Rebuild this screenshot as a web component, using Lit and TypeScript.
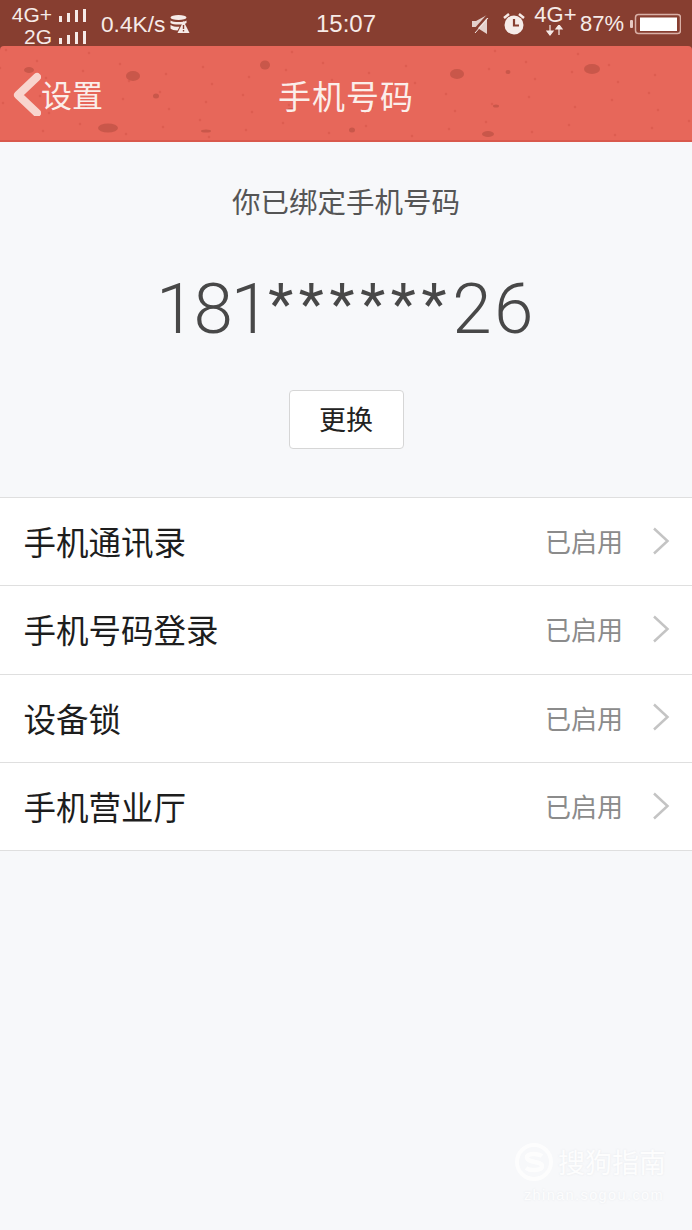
import { LitElement, css, html, svg } from 'lit';
import { customElement } from 'lit/decorators.js';

const rows = ['手机通讯录', '手机号码登录', '设备锁', '手机营业厅'];

// [cx, cy, rx, ry] of the pits in the nav bar texture
const spots = [
  [29, 70, 5, 3], [133, 76, 7, 5], [156, 96, 3, 2.5], [108, 128, 10, 4.5], [206, 131, 5, 1.5],
  [265, 65, 5, 4.5], [291, 110, 4, 2], [457, 74, 7, 5], [508, 72, 2.5, 2], [592, 69, 8, 5],
  [496, 106, 3, 1.5], [352, 130, 3, 2.5], [488, 134, 6, 3],
];
// fine grain, scattered with a fixed step so it stays the same on every run
const specks = Array.from({ length: 70 }, (_, i) => [(i * 163 + 37) % 692, 50 + ((i * 59 + 11) % 88)]);

const bars = () => html`
  <svg class="bars" width="28" height="13" viewBox="0 0 28 13">
    <rect x="0" y="7" width="3" height="6"></rect>
    <rect x="8" y="4" width="3" height="9"></rect>
    <rect x="16" y="1" width="3" height="12"></rect>
    <rect x="24" y="0" width="3" height="13"></rect>
  </svg>`;

@customElement('app-root')
export class AppRoot extends LitElement {
  static styles = css`
    :host {
      display: block;
      position: relative;
      width: 692px;
      height: 1230px;
      overflow: hidden;
      background: #f7f8fa;
      font-family: "Noto Sans CJK SC", "Liberation Sans", sans-serif;
    }
    .status {
      height: 46px;
      box-sizing: border-box;
      background: #873e30;
      color: #f6ebe8;
      font-family: "Liberation Sans", "Noto Sans CJK SC", sans-serif;
      display: grid;
      grid-template-columns: 1fr auto 1fr;
      align-items: center;
    }
    .status-left, .status-right {
      display: flex;
      align-items: center;
    }
    .status-left { padding-left: 11px; }
    .status-right { justify-content: flex-end; padding-right: 11px; }
    .nets {
      display: flex;
      flex-direction: column;
      align-items: flex-end;
      width: 76px;
      font-size: 21px;
      line-height: 22px;
      margin-top: 4px;
    }
    .net {
      display: flex;
      align-items: center;
      gap: 7px;
    }
    .bars { fill: #f6ebe8; }
    .speed {
      font-size: 22.7px;
      margin-left: 14px;
      margin-right: 4px;
      padding-top: 1px;
    }
    .time { font-size: 24px; }
    .mute { margin-right: 12px; }
    .alarm { margin-right: 9px; }
    .net-type {
      display: flex;
      flex-direction: column;
      align-items: center;
      width: 41px;
      margin-right: 4px;
      font-size: 22px;
      line-height: 22px;
      margin-top: -8px;
    }
    .net-type svg { margin-top: -1px; }
    .percent { font-size: 22px; margin-right: 6px; }
    .nav {
      position: relative;
      height: 96px;
      box-sizing: border-box;
      background: #e7675a;
      border-bottom: 2px solid #d9594c;
      border-radius: 4px 4px 0 0;
      color: #fbeeea;
      display: flex;
      align-items: center;
      justify-content: center;
    }
    .top-edge { background: #873e30; }
    .texture {
      position: absolute;
      left: 0;
      top: -46px;
    }
    .back {
      position: absolute;
      left: 12px;
      top: 26px;
      display: flex;
      align-items: center;
      font-size: 31px;
      line-height: 44px;
    }
    .title {
      position: relative;
      font-size: 33px;
      letter-spacing: 1px;
      margin-top: 4px;
    }
    .bound {
      display: flex;
      flex-direction: column;
      align-items: center;
      height: 355px;
      box-sizing: border-box;
      padding-top: 39px;
    }
    .hint {
      font-size: 28.5px;
      line-height: 40px;
      color: #555;
    }
    .number {
      font-family: Roboto, "Liberation Sans", sans-serif;
      font-weight: 300;
      font-size: 71px;
      line-height: 84px;
      height: 89px;
      color: #484848;
      margin-top: 41px;
    }
    .lead { letter-spacing: -2px; }
    .tail { letter-spacing: 2.5px; }
    .stars {
      font-size: 58px;
      letter-spacing: 5.7px;
      vertical-align: 9px;
      font-weight: 400;
    }
    .change {
      box-sizing: border-box;
      width: 115px;
      height: 59px;
      margin-top: 39px;
      padding-bottom: 2px;
      background: #fff;
      border: 1px solid #d6d6d6;
      border-radius: 4px;
      font-size: 27px;
      color: #222;
      display: flex;
      align-items: center;
      justify-content: center;
    }
    .list {
      background: #fff;
      border-top: 1px solid #dfdfdf;
    }
    .row {
      height: 88.3px;
      box-sizing: border-box;
      border-bottom: 1px solid #dfdfdf;
      display: flex;
      align-items: center;
      padding: 0 22px 2px 23.5px;
    }
    .name {
      flex: 1;
      font-size: 32.5px;
      color: #1d1d1d;
    }
    .value {
      font-size: 26px;
      color: #8b8b8b;
      margin-right: 29px;
    }
    .watermark {
      position: absolute;
      left: 514px;
      top: 1142px;
      width: 160px;
      color: #fff;
      opacity: 0.75;
      text-shadow: 0 0 2px rgba(180, 185, 195, 0.3);
    }
    .mark-top {
      display: flex;
      align-items: center;
      gap: 4px;
    }
    .mark-name {
      font-size: 27px;
      line-height: 40px;
    }
    .mark-url {
      font-family: "Liberation Sans", sans-serif;
      font-size: 14.5px;
      letter-spacing: 1.4px;
      margin-top: 5px;
      text-align: center;
    }
  `;

  render() {
    return html`
      <div class="status">
        <div class="status-left">
          <div class="nets">
            <div class="net">4G+ ${bars()}</div>
            <div class="net">2G ${bars()}</div>
          </div>
          <span class="speed">0.4K/s</span>
          <svg width="21" height="20" viewBox="0 0 20 20">
            <g fill="#f6ebe8">
              <ellipse cx="9" cy="3.5" rx="8" ry="2.5"></ellipse>
              <path d="M1 6.5c3 2 13 2 16 0v2.5c-3 2-13 2-16 0zM1 11c2 1.400 6 2 9 1.800L8 16.500c-3 0-6-1-7-2z"></path>
              <path d="M14 7l6 12H8z"></path>
            </g>
            <path d="M14 11v4M14 16v1.500" stroke="#873e30" stroke-width="1.400"></path>
          </svg>
        </div>
        <div class="time">15:07</div>
        <div class="status-right">
          <svg class="mute" width="20" height="22" viewBox="0 0 20 22">
            <path d="M2 8h4l11-6v19l-11-7H2z" fill="#e4d0cb"></path>
            <path d="M2 20L18 2" stroke="#873e30" stroke-width="2.500" fill="none"></path>
            <path d="M5 20L18 5" stroke="#f6ebe8" stroke-width="1" fill="none"></path>
          </svg>
          <svg class="alarm" width="24" height="24" viewBox="0 0 24 24">
            <circle cx="12" cy="13" r="9.500" fill="#f6ebe8"></circle>
            <path d="M12 7v6.500h5" stroke="#873e30" stroke-width="2.200" fill="none"></path>
            <path d="M2 6l5-4M22 6l-5-4" stroke="#f6ebe8" stroke-width="2.500"></path>
          </svg>
          <div class="net-type">
            <span>4G+</span>
            <svg width="18" height="11" viewBox="0 0 18 11">
              <path d="M4 0v6M1 6h6L4 10zM13 10V4M10 4h6l-3-4z" stroke="#f6ebe8" stroke-width="1.200" fill="#f6ebe8"></path>
            </svg>
          </div>
          <span class="percent">87%</span>
          <svg width="51" height="22" viewBox="0 0 51 22">
            <rect x="0" y="7" width="3" height="8" rx="1" fill="#e6c9c2"></rect>
            <rect x="5.500" y="1.500" width="45" height="19" rx="3" fill="none" stroke="#d9b0a6" stroke-width="1.500"></rect>
            <rect x="10" y="4.500" width="37" height="13.500" fill="#fff"></rect>
          </svg>
        </div>
      </div>
      <div class="top-edge">
        <div class="nav">
          <svg class="texture" width="692" height="142" viewBox="0 0 692 142" aria-hidden="true">
            ${specks.map(([x, y]) => svg`<circle cx=${x} cy=${y} r="1.200" fill="#d95a4d" opacity="0.7"></circle>`)}
            ${spots.map(([cx, cy, rx, ry]) => svg`<ellipse cx=${cx} cy=${cy} rx=${rx} ry=${ry} fill="#c9574a"></ellipse>`)}
          </svg>
          <div class="back">
            <svg width="29" height="44" viewBox="0 0 29 44">
              <path d="M25 5L6 23l19 18" fill="none" stroke="#f8d5ce" stroke-width="8" stroke-linecap="round" stroke-linejoin="round"></path>
            </svg>
            <span>设置</span>
          </div>
          <div class="title">手机号码</div>
        </div>
      </div>
      <div class="bound">
        <div class="hint">你已绑定手机号码</div>
        <div class="number"><span class="lead">181</span><span class="stars">******</span><span class="tail">26</span></div>
        <div class="change">更换</div>
      </div>
      <div class="list">
        ${rows.map(name => html`
          <div class="row">
            <span class="name">${name}</span>
            <span class="value">已启用</span>
            <svg width="18" height="28" viewBox="0 0 18 28">
              <path d="M2 1.500L15.500 14 2 26.500" fill="none" stroke="#c4c4c4" stroke-width="2.500"></path>
            </svg>
          </div>
        `)}
      </div>
      <div class="watermark">
        <div class="mark-top">
          <svg width="40" height="40" viewBox="0 0 40 40">
            <circle cx="20" cy="20" r="17" fill="none" stroke="#fff" stroke-width="4"></circle>
            <path d="M28 14c-4-3-16-3-15 2s15 3 15 8-12 5-16 2" fill="none" stroke="#fff" stroke-width="4.500"></path>
          </svg>
          <span class="mark-name">搜狗指南</span>
        </div>
        <div class="mark-url">zhinan.sogou.com</div>
      </div>
    `;
  }
}
